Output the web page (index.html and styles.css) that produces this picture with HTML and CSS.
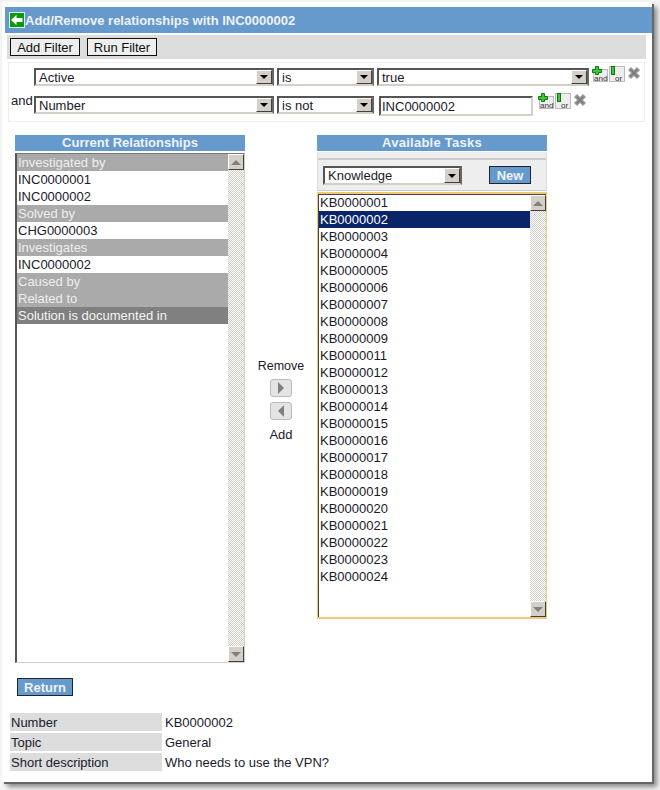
FILE: index.html
```html
<!DOCTYPE html>
<html lang="en">
<head>
<meta charset="utf-8">
<title>Add/Remove relationships</title>
<link rel="stylesheet" href="styles.css">
</head>
<body>
<div class="window">
  <header class="title">
    <svg class="back" width="16" height="16" viewBox="0 0 16 16"><rect x="0.5" y="0.5" width="15" height="15" fill="#0a9a10" stroke="#e8f4e8"/><path d="M2 8 7.500 2.800V6H13.500V10H7.500V13.200Z" fill="#fff"/></svg>
    <span>Add/Remove relationships with INC0000002</span>
  </header>
  <div class="toolbar">
    <button class="plain-btn">Add Filter</button>
    <button class="plain-btn">Run Filter</button>
  </div>
  <div class="filters">
    <div class="filter-row first">
      <span class="conj"></span>
      <div class="sel w-field"><span class="sel-text">Active</span><span class="drop"><i></i></span></div>
      <div class="sel w-op"><span class="sel-text">is</span><span class="drop"><i></i></span></div>
      <div class="sel w-val"><span class="sel-text">true</span><span class="drop"><i></i></span></div>
      <div class="tools">
        <svg class="tool" width="16" height="16" viewBox="0 0 16 16"><rect x="1.500" y="3.500" width="14" height="12" fill="#eee" stroke="#bbb"/><path d="M3.500 0.500H6.500V3.500H9.500V6.500H6.500V8.500H3.500V6.500H0.500V3.500H3.500Z" fill="#3fc53f" stroke="#0a7a0a"/><text x="2" y="14.500" class="tool-text">and</text></svg>
        <svg class="tool" width="16" height="16" viewBox="0 0 16 16"><rect x="0.500" y="0.500" width="15" height="15" fill="#eee" stroke="#bbb"/><rect x="2.500" y="0.500" width="3" height="8" fill="#3fc53f" stroke="#0a7a0a"/><text x="6" y="14.500" class="tool-text">or</text></svg>
        <svg class="del" width="14" height="14" viewBox="0 0 14 14"><path d="M2 4 4 2 7 5 10 2 12 4 9 7 12 10 10 12 7 9 4 12 2 10 5 7Z" fill="#777" stroke="#999" stroke-width="1.500"/></svg>
      </div>
    </div>
    <div class="filter-row second">
      <span class="conj">and</span>
      <div class="sel w-field"><span class="sel-text">Number</span><span class="drop"><i></i></span></div>
      <div class="sel w-op"><span class="sel-text">is not</span><span class="drop"><i></i></span></div>
      <div class="text-input">INC0000002</div>
      <div class="tools">
        <svg class="tool" width="16" height="16" viewBox="0 0 16 16"><rect x="1.500" y="3.500" width="14" height="12" fill="#eee" stroke="#bbb"/><path d="M3.500 0.500H6.500V3.500H9.500V6.500H6.500V8.500H3.500V6.500H0.500V3.500H3.500Z" fill="#3fc53f" stroke="#0a7a0a"/><text x="2" y="14.500" class="tool-text">and</text></svg>
        <svg class="tool" width="16" height="16" viewBox="0 0 16 16"><rect x="0.500" y="0.500" width="15" height="15" fill="#eee" stroke="#bbb"/><rect x="2.500" y="0.500" width="3" height="8" fill="#3fc53f" stroke="#0a7a0a"/><text x="6" y="14.500" class="tool-text">or</text></svg>
        <svg class="del" width="14" height="14" viewBox="0 0 14 14"><path d="M2 4 4 2 7 5 10 2 12 4 9 7 12 10 10 12 7 9 4 12 2 10 5 7Z" fill="#777" stroke="#999" stroke-width="1.500"/></svg>
      </div>
    </div>
  </div>
  <div class="slush">
    <section class="panel">
      <h2 class="panel-head">Current Relationships</h2>
      <div class="list list-left">
        <ul class="items">
          <li class="group">Investigated by</li>
          <li>INC0000001</li>
          <li>INC0000002</li>
          <li class="group">Solved by</li>
          <li>CHG0000003</li>
          <li class="group">Investigates</li>
          <li>INC0000002</li>
          <li class="group">Caused by</li>
          <li class="group">Related to</li>
          <li class="group active">Solution is documented in</li>
        </ul>
        <div class="scroll">
          <span class="sb-btn"><i class="up"></i></span>
          <span class="sb-track"></span>
          <span class="sb-btn"><i class="down"></i></span>
        </div>
      </div>
    </section>
    <div class="mover">
      <span class="mover-label">Remove</span>
      <span class="arrow-btn"><i class="right"></i></span>
      <span class="arrow-btn"><i class="left"></i></span>
      <span class="mover-label add">Add</span>
    </div>
    <section class="panel">
      <h2 class="panel-head head-wide">Available Tasks</h2>
      <div class="picker">
        <div class="sel w-kind"><span class="sel-text">Knowledge</span><span class="drop"><i></i></span></div>
        <button class="blue-btn new">New</button>
      </div>
      <div class="focus-ring">
        <div class="list list-right">
          <ul class="items">
            <li>KB0000001</li>
            <li class="selected">KB0000002</li>
            <li>KB0000003</li>
            <li>KB0000004</li>
            <li>KB0000005</li>
            <li>KB0000006</li>
            <li>KB0000007</li>
            <li>KB0000008</li>
            <li>KB0000009</li>
            <li>KB0000011</li>
            <li>KB0000012</li>
            <li>KB0000013</li>
            <li>KB0000014</li>
            <li>KB0000015</li>
            <li>KB0000016</li>
            <li>KB0000017</li>
            <li>KB0000018</li>
            <li>KB0000019</li>
            <li>KB0000020</li>
            <li>KB0000021</li>
            <li>KB0000022</li>
            <li>KB0000023</li>
            <li>KB0000024</li>
          </ul>
          <div class="scroll">
            <span class="sb-btn"><i class="up"></i></span>
            <span class="sb-track"></span>
            <span class="sb-btn"><i class="down"></i></span>
          </div>
        </div>
      </div>
    </section>
  </div>
  <button class="blue-btn return">Return</button>
  <dl class="info">
    <div class="info-row"><dt>Number</dt><dd>KB0000002</dd></div>
    <div class="info-row"><dt>Topic</dt><dd>General</dd></div>
    <div class="info-row"><dt>Short description</dt><dd>Who needs to use the VPN?</dd></div>
  </dl>
</div>
</body>
</html>
```
FILE: styles.css
```css
* { box-sizing: border-box; }
html, body { margin: 0; padding: 0; }
body {
  width: 660px;
  height: 790px;
  overflow: hidden;
  background: #f4f4f4;
  font-family: "Liberation Sans", Arial, sans-serif;
  font-size: 13px;
  color: #1a1a2a;
}
.window {
  width: 650px;
  height: 780px;
  margin: 2px 0 0 2px;
  padding-top: 5px;
  background: #fff;
  box-shadow: 2px 2px 0 #666, 5px 5px 5px #888;
  overflow: hidden;
}
.title {
  display: flex;
  align-items: center;
  height: 26px;
  margin-left: 3px;
  padding-left: 4px;
  background: #6699cc;
  color: #eef3fa;
  font-size: 13px;
  font-weight: bold;
}
.back { flex: none; }
.toolbar {
  display: flex;
  gap: 7px;
  height: 24px;
  margin: 2px 6px 0 5px;
  padding: 3px 3px;
  background: #dddddd;
}
.plain-btn {
  width: 70px;
  height: 18px;
  padding: 0;
  border: 1px solid #111;
  background: #eeeeee;
  color: #111;
  font: 13px "Liberation Sans", Arial, sans-serif;
}
.filters {
  height: 60px;
  margin: 3px 7px 0 6px;
  border: 1px solid #eeeeee;
}
.filter-row {
  display: flex;
  align-items: flex-start;
  padding-left: 2px;
}
.first { height: 33px; padding-top: 5px; }
.second { height: 22px; }
.conj { width: 23px; margin-top: -3px; flex: none; }
.sel {
  display: flex;
  flex: none;
  height: 18px;
  margin-right: 3px;
  border: 2px solid;
  border-color: #555 #666 #d4d0c8 #555;
  background: #fff;
}
.sel-text {
  flex: 1;
  padding-left: 3px;
  line-height: 15px;
}
.drop {
  display: flex;
  align-items: center;
  justify-content: center;
  width: 16px;
  background: #d4d0c8;
  border-left: 1px solid #fff;
  border-top: 1px solid #fff;
  border-right: 1px solid #404040;
  border-bottom: 1px solid #404040;
}
.drop i {
  width: 0;
  height: 0;
  border: 4px solid transparent;
  border-top-color: #000;
  border-bottom: 0;
}
.w-field { width: 240px; }
.w-op { width: 97px; }
.w-val { width: 212px; }
.w-kind { width: 139px; height: 19px; margin: 0; }
.text-input {
  flex: none;
  width: 154px;
  height: 20px;
  margin: 0 5px 0 2px;
  padding-left: 1px;
  border: 2px solid;
  border-color: #555 #d4d0c8 #d4d0c8 #555;
  line-height: 17px;
}
.tools {
  display: flex;
  align-items: flex-start;
  flex: none;
}
.first .tools { margin-top: -2px; }
.second .tools { margin-top: -3px; }
.tool { display: block; margin-right: 1px; }
.tool-text { font: 8px "Liberation Sans", Arial, sans-serif; fill: #333; }
.del { display: block; margin-left: 1px; }
.slush {
  display: flex;
  align-items: flex-start;
  margin: 13px 0 0 13px;
}
.panel { width: 230px; flex: none; }
.panel-head {
  height: 16px;
  margin: 0;
  background: #6699cc;
  color: #eef3fa;
  font-size: 13px;
  font-weight: bold;
  line-height: 16px;
  text-align: center;
}
.head-wide { letter-spacing: 0.25px; }
.list {
  display: flex;
  background: #fff;
}
.list-left {
  height: 510px;
  margin-top: 2px;
  border: 1px solid #d4d0c8;
  border-top-color: #777;
  border-left: 2px solid #555;
}
.list-right {
  height: 423px;
  border-top: 1px solid #444;
  border-left: 1px solid #444;
}
.items {
  flex: 1;
  min-width: 0;
  margin: 0;
  padding: 0;
  list-style: none;
}
.list-right .items { margin-top: -1px; }
.items li {
  height: 17px;
  padding-left: 1px;
  line-height: 17px;
  white-space: nowrap;
}
.group { background: #aaaaaa; color: #eeeeee; }
.items .active { background: #808080; color: #f4f4f4; }
.items .selected { background: #0a246a; color: #fff; }
.scroll {
  display: flex;
  flex-direction: column;
  flex: none;
  width: 16px;
  background: repeating-conic-gradient(#cfcfc8 0 25%, #fff 0 50%) 0 0 / 2px 2px;
}
.sb-track { flex: 1; }
.sb-btn {
  display: flex;
  align-items: center;
  justify-content: center;
  height: 16px;
  background: #d4d0c8;
  border: 1px solid;
  border-color: #fff #404040 #404040 #fff;
}
.sb-btn i { width: 0; height: 0; border: 5px solid transparent; }
.sb-btn .up { border-bottom-color: #808080; border-top: 0; }
.sb-btn .down { border-top-color: #808080; border-bottom: 0; }
.mover {
  display: flex;
  flex-direction: column;
  align-items: center;
  flex: none;
  width: 72px;
  padding-top: 224px;
}
.mover-label { height: 14px; line-height: 14px; margin-bottom: 6px; font-size: 12.5px; }
.mover .add { margin: 3px 0 0; font-size: 13px; }
.arrow-btn {
  display: flex;
  align-items: center;
  justify-content: center;
  width: 22px;
  height: 18px;
  margin-bottom: 5px;
  border: 1px solid #bbb;
  border-radius: 3px;
  background: #e4e4e4;
}
.arrow-btn i { width: 0; height: 0; border: 6px solid transparent; }
.arrow-btn .right { border-left-color: #808080; border-right: 0; }
.arrow-btn .left { border-right-color: #808080; border-left: 0; }
.picker {
  display: flex;
  align-items: flex-start;
  gap: 27px;
  height: 39px;
  margin-top: 1px;
  padding: 14px 0 0 5px;
  background: linear-gradient(#eee 6px, #ccc 6px, #ccc 8px, #eee 8px);
  border: 1px solid #ddd;
  border-top: 0;
  border-bottom: 1px solid #ccc;
}
.blue-btn {
  padding: 0;
  border: 1px solid #223;
  background: #6699cc;
  color: #eef3fa;
  font: bold 13px "Liberation Sans", Arial, sans-serif;
}
.new { width: 42px; height: 18px; }
.focus-ring {
  margin-top: 1px;
  border: 1px solid #f2c878;
  border-width: 2px 1px 2px 1px;
}
.return {
  display: block;
  width: 56px;
  height: 18px;
  margin: 15px 0 0 15px;
}
.info { margin: 17px 0 0 8px; }
.info-row {
  display: flex;
  height: 18px;
  margin-bottom: 2px;
  line-height: 19px;
}
.info dt {
  width: 152px;
  padding-left: 1px;
  background: #dddddd;
}
.info dd { margin: 0; padding-left: 3px; }
```
